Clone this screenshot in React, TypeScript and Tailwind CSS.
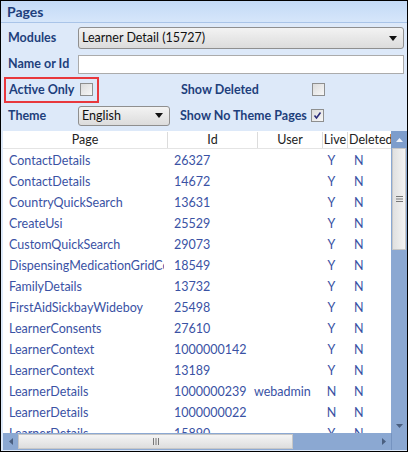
import React from "react";

const rows = [
  ["ContactDetails", "26327", "", "Y", "N"],
  ["ContactDetails", "14672", "", "Y", "N"],
  ["CountryQuickSearch", "13631", "", "Y", "N"],
  ["CreateUsi", "25529", "", "Y", "N"],
  ["CustomQuickSearch", "29073", "", "Y", "N"],
  ["DispensingMedicationGridControl", "18549", "", "Y", "N"],
  ["FamilyDetails", "13732", "", "Y", "N"],
  ["FirstAidSickbayWideboy", "25498", "", "Y", "N"],
  ["LearnerConsents", "27610", "", "Y", "N"],
  ["LearnerContext", "1000000142", "", "Y", "N"],
  ["LearnerContext", "13189", "", "Y", "N"],
  ["LearnerDetails", "1000000239", "webadmin", "N", "N"],
  ["LearnerDetails", "1000000022", "", "N", "N"],
  ["LearnerDetails", "15890", "", "Y", "N"],
];

function Checkbox({ checked }: { checked?: boolean }) {
  return (
    <div className="w-[13px] h-[13px] shrink-0 border border-[#8e8f8f] bg-gradient-to-br from-[#dcdcdc] to-[#f7f7f7] flex items-center justify-center">
      {checked && (
        <svg width="9" height="9" viewBox="0 0 9 9">
          <path d="M1.5 4.5 L3.5 7 L7.5 1.5" fill="none" stroke="#2b2c7a" strokeWidth="1.6" />
        </svg>
      )}
    </div>
  );
}

function Caret() {
  return (
    <svg width="8" height="5" viewBox="0 0 8 5">
      <path d="M0 0 H8 L4 5 Z" fill="#111" />
    </svg>
  );
}

export default function App() {
  return (
    <div
      className="w-[408px] h-[452px] border border-black bg-[#dde9f9] flex flex-col overflow-hidden text-[12.5px] leading-[16px]"
      style={{ fontFamily: "Lato, 'Noto Sans', sans-serif" }}
    >
      {/* Title bar */}
      <div className="h-[22px] shrink-0 bg-gradient-to-b from-[#c3daf6] to-[#d6e6fa] border-b border-[#a9c4e8] px-[6px] flex items-center">
        <span className="font-bold text-[14px] text-[#1e3f7c]">Pages</span>
      </div>

      {/* Filters */}
      <div className="flex flex-col text-[#1e3f7c] font-bold whitespace-nowrap">
        <div className="h-[28px] flex items-center pl-[7px] pr-[3px] mt-[1px]">
          <span className="w-[70px] shrink-0">Modules</span>
          <div className="flex-1 h-[22px] rounded-[3px] border border-[#8f8f8f] bg-gradient-to-b from-[#f3f3f3] to-[#dcdcdc] flex items-center justify-between pl-[3px] pr-[6px] font-normal text-[#111]">
            <span>Learner Detail (15727)</span>
            <Caret />
          </div>
        </div>
        <div className="h-[24px] flex items-center pl-[7px] pr-[3px]">
          <span className="w-[70px] shrink-0">Name or Id</span>
          <div className="flex-1 h-[19px] border border-[#ababab] bg-white" />
        </div>
        <div className="h-[27px] flex items-center pl-[3px] pr-[3px]">
          <div className="w-[95px] h-[26px] shrink-0 border-2 border-[#e8383d] flex items-center pl-[3px]">
            <span className="w-[71px] shrink-0">Active Only</span>
            <Checkbox />
          </div>
          <span className="ml-[82px] w-[131px] shrink-0">Show Deleted</span>
          <Checkbox />
        </div>
        <div className="h-[25px] flex items-center pl-[7px] pr-[3px]">
          <span className="w-[70px] shrink-0">Theme</span>
          <div className="w-[92px] h-[20px] shrink-0 rounded-[3px] border border-[#8f8f8f] bg-gradient-to-b from-[#f3f3f3] to-[#dcdcdc] flex items-center justify-between pl-[3px] pr-[6px] font-normal text-[#111]">
            <span>English</span>
            <Caret />
          </div>
          <span className="ml-[10px] w-[131px] shrink-0">Show No Theme Pages</span>
          <Checkbox checked />
        </div>
      </div>

      {/* Grid */}
      <div className="ml-[2px] mt-[3px] flex-1 bg-white flex flex-col min-h-0">
        <div className="flex-1 flex min-h-0">
          <div className="flex-1 overflow-hidden flex flex-col text-[#3a52a4]">
            <div className="h-[18px] shrink-0 flex items-center text-[#222] border-b border-[#e4e4e4] whitespace-nowrap">
              <div className="w-[165px] shrink-0 text-center border-r border-[#dcdcdc]">Page</div>
              <div className="w-[90px] shrink-0 text-center border-r border-[#dcdcdc]">Id</div>
              <div className="w-[65px] shrink-0 text-center border-r border-[#dcdcdc]">User</div>
              <div className="w-[25px] shrink-0 text-center border-r border-[#dcdcdc]">Live</div>
              <div className="w-[50px] shrink-0 pl-[1px]">Deleted</div>
            </div>
            <div className="flex flex-col pt-[1px]">
              {rows.map((r, i) => (
                <div key={i} className="h-[21px] shrink-0 flex items-center whitespace-nowrap">
                  <div className="w-[161px] mr-[4px] shrink-0 pl-[6px] overflow-hidden">{r[0]}</div>
                  <div className="w-[86px] shrink-0 pl-[6px]">{r[1]}</div>
                  <div className="w-[65px] shrink-0">{r[2]}</div>
                  <div className="w-[25px] shrink-0 text-center">{r[3]}</div>
                  <div className="w-[50px] shrink-0 pl-[10px]">{r[4]}</div>
                </div>
              ))}
            </div>
          </div>
          {/* vertical scrollbar */}
          <div className="w-[16px] shrink-0 bg-[#8ba8d2] flex flex-col">
            <div className="h-[17px] bg-[#7d9dcc] flex items-center justify-center">
              <svg width="7" height="4" viewBox="0 0 7 4"><path d="M0 4 L3.5 0 L7 4 Z" fill="#eef3fb" /></svg>
            </div>
            <div className="h-[102px] mx-[1px] bg-gradient-to-r from-[#e0e0e0] to-[#f4f4f4] border border-[#c7c7c7] flex items-center justify-center">
              <svg width="7" height="6" viewBox="0 0 7 6">
                <path d="M0 0.5 H7 M0 3 H7 M0 5.5 H7" stroke="#777" strokeWidth="1" />
              </svg>
            </div>
            <div className="flex-1" />
            <div className="h-[15px] flex items-center justify-center">
              <svg width="7" height="4" viewBox="0 0 7 4"><path d="M0 0 H7 L3.5 4 Z" fill="#4a5f80" /></svg>
            </div>
          </div>
        </div>
        {/* horizontal scrollbar */}
        <div className="h-[17px] shrink-0 flex bg-[#8ba8d2]">
          <div className="w-[15px] flex items-center justify-center">
            <svg width="4" height="7" viewBox="0 0 4 7"><path d="M4 0 V7 L0 3.5 Z" fill="#4a5f80" /></svg>
          </div>
          <div className="w-[275px] my-[1px] bg-gradient-to-b from-[#f4f4f4] to-[#dedede] border border-[#c7c7c7] flex items-center justify-center">
            <svg width="6" height="7" viewBox="0 0 6 7">
              <path d="M0.5 0 V7 M3 0 V7 M5.5 0 V7" stroke="#777" strokeWidth="1" />
            </svg>
          </div>
          <div className="flex-1" />
          <div className="w-[15px] flex items-center justify-center">
            <svg width="4" height="7" viewBox="0 0 4 7"><path d="M0 0 V7 L4 3.5 Z" fill="#4a5f80" /></svg>
          </div>
          <div className="w-[16px] bg-[#8ba8d2] border-l border-[#7593c0]" />
        </div>
        <div className="h-[1px] shrink-0 bg-[#dde9f9]" />
      </div>
    </div>
  );
}
